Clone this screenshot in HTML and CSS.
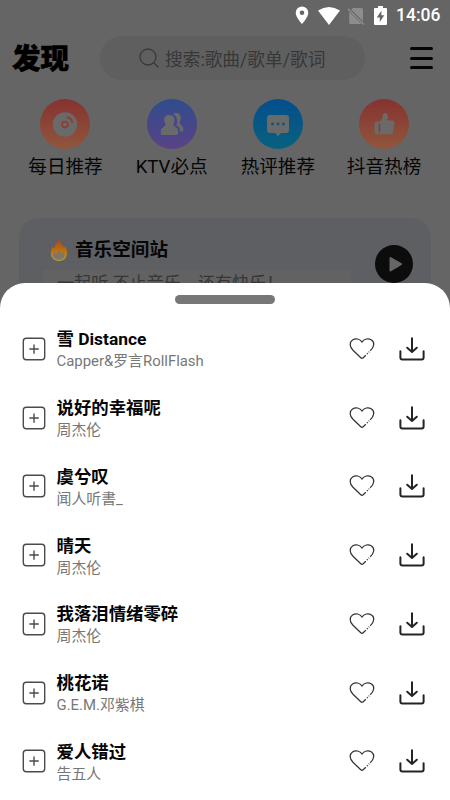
FILE: index.html
```
<!DOCTYPE html>
<html lang="zh-CN">
<head>
<meta charset="utf-8">
<title>发现</title>
<link rel="stylesheet" href="styles.css">
</head>
<body>
<svg class="defs" aria-hidden="true">
  <symbol id="add" viewBox="0 0 24 24"><g fill="none" stroke="#4b4b4b" stroke-width="1.4"><rect x="1.3" y="1.3" width="21.4" height="21.4" rx="3"/><path d="M7.400 12h9.400M12 7.400v9.400"/></g></symbol>
  <symbol id="heart" viewBox="0 0 26 24"><g fill="none" stroke="#333" stroke-width="1.250"><path d="M21.200 13.800C25.500 9.800 25.800 5.400 22.500 3 19.300.9 15 1.800 13 5 11 1.800 6.700.9 3.500 3 .2 5.400.5 9.800 4 13.300L11.800 20.700q1.200 1.100 2.400 0l2.600-2.500"/><path d="M17.900 17.100l.8-.8M19.700 15.300l.6-.6"/></g></symbol>
  <symbol id="download" viewBox="0 0 28 26"><g fill="none" stroke="#242424" stroke-width="2" stroke-linecap="round" stroke-linejoin="round"><path d="M14 2.300v13.200M9.200 11.700L14 16l4.800-4.300"/><path d="M2.400 15.200v6.300q0 2 2 2h19.200q2 0 2-2v-6.300"/></g></symbol>
</svg>
<div class="phone">
  <header class="status">
    <svg class="pin" viewBox="0 0 14 19"><path fill="#fff" fill-rule="evenodd" d="M7 .5a6.300 6.300 0 0 0-6.300 6.300C.7 11.500 7 18 7 18s6.300-6.500 6.300-11.200A6.300 6.300 0 0 0 7 .5zm0 4a2.300 2.300 0 1 1 0 4.600 2.300 2.300 0 0 1 0-4.600z"/></svg>
    <svg class="wifi" viewBox="0 0 22 18"><path fill="#fff" d="M0 3.500Q11-3.500 22 3.500L11 18z"/></svg>
    <svg class="sim" viewBox="0 0 18 18"><path fill="#8d8d8d" d="M6 1h8.500q1.500 0 1.500 1.500v11.700L4.200 2.600zM2.200 4.700L14.800 17H3.700q-1.500 0-1.500-1.500z"/><path d="M1 1.800l15.800 15.700" stroke="#8d8d8d" stroke-width="1.400"/></svg>
    <svg class="battery" viewBox="0 0 13 19"><path fill="#fff" d="M4 0h5v2h3q1 0 1 1v15q0 1-1 1H1q-1 0-1-1V3q0-1 1-1h3z"/><path fill="#656565" d="M7.400 4.800L2.800 11.500h3v4.400l4.500-6.700H7.400z"/></svg>
    <span>14:06</span>
  </header>
  <div class="topbar">
    <h1>发现</h1>
    <div class="search">
      <svg viewBox="0 0 20 20"><g fill="none" stroke="#393939" stroke-width="1.300"><circle cx="9" cy="9" r="8"/><path d="M14.700 14.700l4.600 4.600"/></g></svg>
      <span>搜索:歌曲/歌单/歌词</span>
    </div>
    <div class="menu"><i></i><i></i><i></i></div>
  </div>
  <nav class="shortcuts">
    <div class="shortcut"><div class="disc red"><svg viewBox="0 0 50 50"><circle cx="25" cy="25.500" r="12.200" fill="#6a6a6a"/><circle cx="25" cy="25.500" r="2.900" fill="none" stroke="#893f34" stroke-width="1.800"/><path d="M27.500 18.500q4 .8 4.800 4.700" fill="none" stroke="#893f34" stroke-width="1.800" stroke-linecap="round"/></svg></div><span>每日推荐</span></div>
    <div class="shortcut"><div class="disc violet"><svg viewBox="0 0 50 50"><path fill="#6a6a6a" d="M26 15c5-3 9.500 1.500 7.300 6.500-1.100 2.500-.8 3.500 1 4.800 2 1.500 2.400 3 1.900 6.200h-3c-.2-3-1-4.700-4-6.300 2-4 1.200-8.500-3.200-11.200z"/><path fill="#6a6a6a" stroke="#414a88" stroke-width="1" d="M22 15.500c5 0 7.200 4.300 5.300 8.500-.9 2-.6 2.700 1.500 3.800 2.700 1.300 3.200 3.200 2.800 6.900q-.2 1.800-1.800 1.800H15q-1.600 0-1.700-1.600c-.2-4.200.6-6 3.100-7.200 1.800-1 2-1.800 1.100-3.700-2-4.200 0-8.500 4.500-8.500z"/></svg></div><span>KTV必点</span></div>
    <div class="shortcut"><div class="disc blue"><svg viewBox="0 0 50 50"><path fill="#6a6a6a" d="M17 16h16q3 0 3 3v12q0 3-3 3h-5l-3 3-3-3h-5q-3 0-3-3V19q0-3 3-3z"/><g fill="#125276"><circle cx="19.500" cy="25" r="1.400"/><circle cx="25" cy="25" r="1.400"/><circle cx="30.500" cy="25" r="1.400"/></g></svg></div><span>热评推荐</span></div>
    <div class="shortcut"><div class="disc red"><svg viewBox="0 0 50 50"><path fill="#6a6a6a" d="M17.500 22.500h3.200c2-1.200 2.600-3 3-6 .5-3.800 5.300-3.200 5.300.8 0 1.800-.2 3-.8 4.200h4.800q2.700 0 2.500 2.700l-1.300 8q-.4 3-3.200 3H18q-2.500 0-2.500-2.500v-7.200q0-3 2-3z"/><path d="M20.500 24.500v9" stroke="#893f34" stroke-width="1.600"/></svg></div><span>抖音热榜</span></div>
  </nav>
  <section class="station">
    <div class="station-head">
      <svg class="flame" viewBox="0 0 18 25"><defs><linearGradient id="fire" x2="0" y2="1"><stop stop-color="#a84414"/><stop offset=".6" stop-color="#bd7412"/><stop offset="1" stop-color="#b39a3a"/></linearGradient></defs><path fill="url(#fire)" d="M8.500 1c.5 4 4.500 6 5.300 10l1.400-2c1.300 3 2.200 5.200 1.800 8-.5 4.500-3.800 7-8 7S1 21.300.8 17C.7 13.500 2 11.700 2.500 9.500l2 2C4.700 7.500 8.200 5.500 8.500 1z"/><path fill="#7b776b" d="M9.500 12c.2 3 1.400 3.500 2.200 5l1.900-2c2.600 4-.4 7.700-4.600 7.700-4.600 0-7-3.500-4.900-7.700L6 17c2-1.300 2.800-2.500 3.500-5z"/></svg>
      <h2>音乐空间站</h2>
    </div>
    <p>一起听 不止音乐，还有快乐！</p>
    <div class="play"><svg viewBox="0 0 38 38"><path d="M15.500 13v12.500L26 19.200z" fill="#666" stroke="#666" stroke-width="2" stroke-linejoin="round"/></svg></div>
  </section>
</div>
<main class="sheet">
  <div class="handle"></div>
  <ul>
    <li><svg class="add"><use href="#add"/></svg><div class="song"><b>雪 Distance</b><small>Capper&amp;罗言RollFlash</small></div><svg class="heart"><use href="#heart"/></svg><svg class="download"><use href="#download"/></svg></li>
    <li><svg class="add"><use href="#add"/></svg><div class="song"><b>说好的幸福呢</b><small>周杰伦</small></div><svg class="heart"><use href="#heart"/></svg><svg class="download"><use href="#download"/></svg></li>
    <li><svg class="add"><use href="#add"/></svg><div class="song"><b>虞兮叹</b><small>闻人听書_</small></div><svg class="heart"><use href="#heart"/></svg><svg class="download"><use href="#download"/></svg></li>
    <li><svg class="add"><use href="#add"/></svg><div class="song"><b>晴天</b><small>周杰伦</small></div><svg class="heart"><use href="#heart"/></svg><svg class="download"><use href="#download"/></svg></li>
    <li><svg class="add"><use href="#add"/></svg><div class="song"><b>我落泪情绪零碎</b><small>周杰伦</small></div><svg class="heart"><use href="#heart"/></svg><svg class="download"><use href="#download"/></svg></li>
    <li><svg class="add"><use href="#add"/></svg><div class="song"><b>桃花诺</b><small>G.E.M.邓紫棋</small></div><svg class="heart"><use href="#heart"/></svg><svg class="download"><use href="#download"/></svg></li>
    <li><svg class="add"><use href="#add"/></svg><div class="song"><b>爱人错过</b><small>告五人</small></div><svg class="heart"><use href="#heart"/></svg><svg class="download"><use href="#download"/></svg></li>
  </ul>
</main>
</body>
</html>
```
FILE: styles.css
```
* { box-sizing: border-box; margin: 0; padding: 0; }
body { position: relative; width: 450px; height: 800px; overflow: hidden; background: #656565; color: #060606; font-family: Roboto, "Noto Sans CJK SC", sans-serif; }
svg { display: block; flex: none; }
.defs { position: absolute; width: 0; height: 0; }
.phone { height: 800px; }

.status { height: 31px; display: flex; align-items: center; padding: 0 10px 0 295px; color: #fff; font-size: 17.500px; font-weight: 500; line-height: 31px; }
.pin { width: 14px; height: 19px; }
.wifi { width: 22px; height: 18px; margin-left: 9px; }
.sim { width: 18px; height: 18px; margin-left: 7px; }
.battery { width: 13px; height: 19px; margin-left: 9px; }
.status span { margin-left: 9px; white-space: nowrap; }

.topbar { height: 54px; display: flex; align-items: center; padding: 0 17px 0 12px; }
.topbar h1 { width: 88px; padding-top: 4px; font-size: 28.500px; line-height: 40px; font-weight: 900; color: #000; -webkit-text-stroke: .6px #000; }
.search { width: 265px; height: 44px; border-radius: 22px; background: #5f5f5f; display: flex; align-items: center; padding-left: 39px; gap: 6px; color: #373737; font-size: 17.700px; white-space: nowrap; }
.search svg { width: 20px; height: 20px; }
.menu { width: 23px; margin-left: auto; display: flex; flex-direction: column; gap: 6.500px; }
.menu i { height: 3px; border-radius: 2px; background: #050505; }

.shortcuts { display: grid; grid-template-columns: repeat(4, 106.200px); padding: 14px 0 0 12.400px; }
.shortcut { display: flex; flex-direction: column; align-items: center; font-size: 18.600px; line-height: 28px; white-space: nowrap; }
.shortcut span { margin-top: 4px; }
.disc { width: 50px; height: 50px; border-radius: 50%; }
.red { background: linear-gradient(#863230, #90573d); }
.violet { background: linear-gradient(#2f4c8d, #5a4285); }
.blue { background: linear-gradient(#044e8d, #08617f); }

.station { position: relative; width: 412px; height: 120px; margin: 37px 0 0 19px; border-radius: 20px; background: #5d5f62; padding: 17px 0 0 24px; }
.station-head { display: flex; align-items: center; height: 29px; padding-left: 7px; gap: 7px; }
.flame { width: 18px; height: 25px; }
.station h2 { font-size: 18.600px; line-height: 28px; }
.station p { width: 308px; height: 40px; margin-top: 6px; padding: 0 0 0 14px; background: #626262; color: #363636; font-size: 17.100px; line-height: 26px; white-space: nowrap; }
.play { position: absolute; right: 18px; top: 27px; width: 38px; height: 38px; border-radius: 50%; background: #0c0c0c; }

.sheet { position: absolute; left: 0; top: 283px; width: 450px; height: 517px; background: #fff; border-radius: 25px 25px 0 0; }
.handle { width: 100px; height: 9px; margin: 12px auto 10.600px; border-radius: 5px; background: #777; }
.sheet ul { list-style: none; }
.sheet li { height: 68.750px; display: flex; align-items: center; padding: 0 24px 0 22px; }
.add { width: 24px; height: 24px; }
.song { flex: 1; padding: 2px 0 0 10.500px; display: flex; flex-direction: column; white-space: nowrap; }
.song b { font-size: 17.400px; line-height: 24px; color: #050505; }
.song small { font-size: 14.900px; line-height: 21px; color: #777; }
.heart { width: 26px; height: 24px; margin-right: 23px; }
.download { width: 28px; height: 26px; }
```
